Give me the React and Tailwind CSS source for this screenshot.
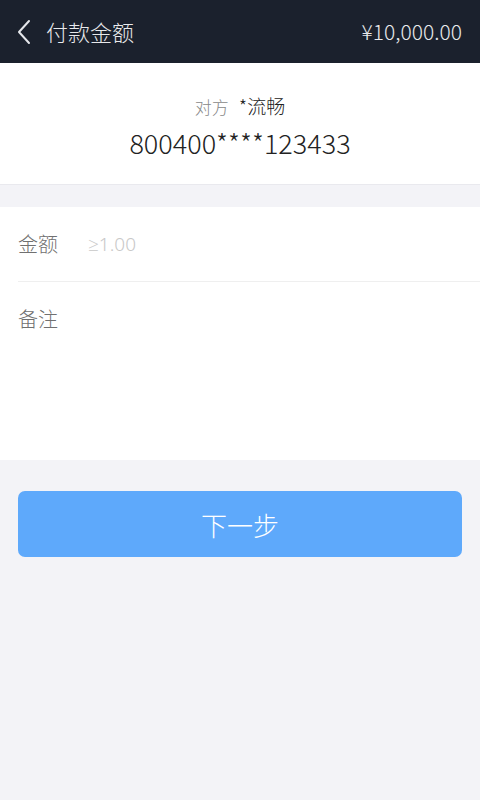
import React from 'react'

const font = { fontFamily: '"Noto Sans CJK SC", "Noto Sans", sans-serif' }
const numFont = { fontFamily: '"Noto Sans", "Open Sans", sans-serif' }

const BackIcon = () => (
  <svg width="16" height="26" viewBox="0 0 16 26" fill="none">
    <path d="M13 2 L3 13 L13 24" stroke="#e5e7eb" strokeWidth="2" strokeLinecap="round" strokeLinejoin="round" />
  </svg>
)

export default function App() {
  return (
    <div className="min-h-[800px] w-[480px] bg-[#f3f3f7] font-light" style={font}>
      {/* Header */}
      <div className="h-[63px] bg-[#1b212d] flex items-center justify-between pl-4 pr-[18px]">
        <div className="flex items-center gap-[14px]">
          <BackIcon />
          <span className="text-[22px] text-[#e8e9eb]">付款金额</span>
        </div>
        <span className="text-[21px] text-[#e8e9eb]">¥10,000.00</span>
      </div>

      {/* Payee */}
      <div className="h-[122px] bg-white border-b border-[#e9e9ee] flex flex-col items-center pt-[23px]">
        <div className="flex items-baseline gap-[10px] leading-[40px] h-[40px]">
          <span className="text-[17px] text-[#888]">对方</span>
          <span className="text-[19px] text-[#222]">*流畅</span>
        </div>
        <div className="text-[27px] text-[#222] leading-[34px]">800400****123433</div>
      </div>

      {/* Form */}
      <div className="mt-[22px] bg-white h-[253px]">
        <div className="ml-[18px] h-[75px] flex items-center border-b border-[#efefef]">
          <span className="text-[20px] text-[#707070] w-[70px]">金额</span>
          <span className="text-[19px] text-[#c8c8c8]" style={numFont}>≥1.00</span>
        </div>
        <div className="px-[18px] pt-[22px]">
          <span className="text-[20px] text-[#707070]">备注</span>
        </div>
      </div>

      {/* Button */}
      <div className="px-[18px] pt-[31px]">
        <button className="w-full h-[66px] rounded-[7px] bg-[#5ea9fb] text-white text-[26px] font-light">下一步</button>
      </div>
    </div>
  )
}
